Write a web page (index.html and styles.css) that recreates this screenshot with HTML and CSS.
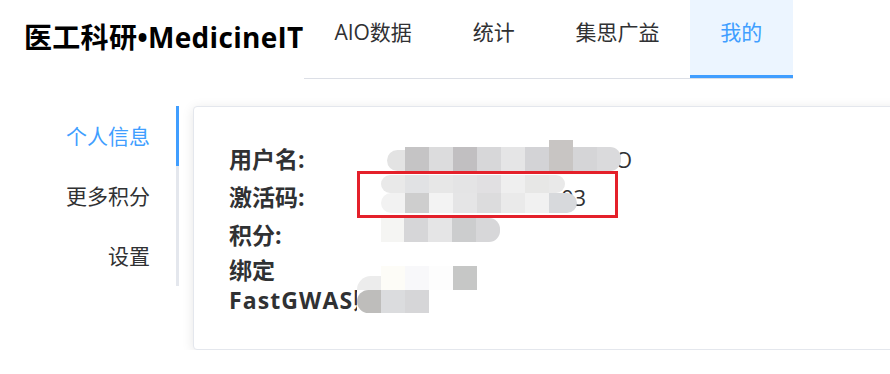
FILE: index.html
```html
<!DOCTYPE html>
<html lang="zh-CN">
<head>
<meta charset="utf-8">
<title>医工科研•MedicineIT</title>
<link rel="stylesheet" href="styles.css">
</head>
<body>
<header class="topbar">
  <div class="brand">医工科研•MedicineIT</div>
  <nav class="menu">
    <a class="menu-item">AIO数据</a>
    <a class="menu-item">统计</a>
    <a class="menu-item">集思广益</a>
    <a class="menu-item is-active">我的</a>
  </nav>
</header>
<main class="layout">
  <aside class="tabs">
    <div class="tab is-active">个人信息</div>
    <div class="tab">更多积分</div>
    <div class="tab">设置</div>
  </aside>
  <section class="card">
    <div class="info">
      <div class="label">用户名:</div>
      <div class="value v1">
        <span class="mosaic m1">
          <i class="cap-l c-e3"></i><i class="c-c5"></i><i class="c-dc"></i><i class="c-c1"></i><i class="c-d7"></i><i class="c-e5"></i><i class="c-d3"></i><i class="tall c-c8"></i><i class="c-d5"></i><i class="cap-r c-da"></i>
        </span><span class="tail t1">O</span>
      </div>

      <div class="label">激活码:</div>
      <div class="value v2">
        <span class="mosaic m2">
          <span class="band b-top">
            <i class="c-e9 rl"></i><i class="c-e1"></i><i class="c-e7"></i><i class="c-e4"></i><i class="c-e0"></i><i class="c-ef"></i><i class="c-e6"></i><i class="c-e9 cap-r"></i>
          </span>
          <span class="band b-bot">
            <i class="c-f2 rl"></i><i class="c-ce"></i><i class="c-f3"></i><i class="c-e5"></i><i class="c-dc"></i><i class="c-ea"></i><i class="c-f1"></i><i class="c-d8 wide cap-r"></i>
          </span>
        </span><span class="tail t2">03</span>
      </div>

      <div class="label">积分:</div>
      <div class="value v3">
        <span class="mosaic m3">
          <i class="c-f5"></i><i class="c-d6"></i><i class="c-e5"></i><i class="c-cd"></i><i class="c-d7 cap-r"></i>
        </span>
      </div>

      <div class="label l4">绑定 <span class="latin">FastGWAS账号:</span></div>
      <div class="value v4">
        <span class="mosaic m4">
          <span class="band b-top4">
            <i class="c-ed curve"></i><i class="c-fd"></i><i class="c-f8"></i><i class="c-fe"></i><i class="c-c6"></i>
          </span>
          <span class="band b-bot4">
            <i class="c-be rl"></i><i class="c-db"></i><i class="c-d6"></i>
          </span>
        </span>
      </div>
    </div>
    <div class="annot"></div>
  </section>
</main>
</body>
</html>
```

FILE: styles.css
```css
html, body {
  margin: 0;
  padding: 0;
  overflow: hidden;
  background: #ffffff;
}

body {
  font-family: "Open Sans", "Noto Sans CJK SC", sans-serif;
  color: #303133;
}

/* ---------- header ---------- */
.topbar {
  display: flex;
  align-items: flex-start;
}

.brand {
  flex: 0 0 304px;
  box-sizing: border-box;
  padding-left: 24px;
  height: 78px;
  line-height: 74px;
  font-size: 28px;
  font-weight: 700;
  letter-spacing: 0.3px;
  color: #000000;
  white-space: nowrap;
}

.menu {
  display: flex;
  border-bottom: 1px solid #dcdfe6;
}

.menu-item {
  display: block;
  height: 75px;
  line-height: 65px;
  padding: 0 30.4px;
  border-bottom: 3px solid transparent;
  font-size: 21px;
  color: #303133;
  white-space: nowrap;
}

.menu-item.is-active {
  background: #ecf5ff;
  color: #409eff;
  border-bottom-color: #409eff;
}

/* ---------- layout ---------- */
.layout {
  display: flex;
  align-items: flex-start;
  padding-top: 27px;
}

.tabs {
  flex: 0 0 179px;
  display: flex;
  flex-direction: column;
}

.tab {
  height: 60px;
  line-height: 60px;
  padding-right: 26px;
  text-align: right;
  font-size: 21px;
  color: #303133;
  border-right: 3px solid #e4e7ed;
}

.tab.is-active {
  color: #409eff;
  border-right-color: #409eff;
}

/* ---------- card ---------- */
.card {
  position: relative;
  flex: 0 0 760px;
  box-sizing: border-box;
  height: 244px;
  margin-left: 14px;
  padding: 33px 0 0 35px;
  border: 1px solid #e4e7ed;
  border-radius: 4px;
  background: #ffffff;
  box-shadow: 0 2px 12px 0 rgba(0, 0, 0, 0.1);
}

.info {
  display: grid;
  grid-template-columns: 152px 1fr;
}

.label {
  padding: 4px 0;
  line-height: 30px;
  font-size: 23px;
  font-weight: 700;
  color: #303133;
}

.label.l4 {
  padding-top: 1px;
}

.label .latin {
  white-space: nowrap;
  letter-spacing: 1.1px;
}

.value {
  display: flex;
  align-items: flex-start;
  font-size: 22px;
  color: #303133;
}

.tail {
  position: relative;
  line-height: 38px;
  z-index: 0;
}

/* ---------- mosaic redactions ---------- */
.mosaic {
  position: relative;
  z-index: 1;
  display: flex;
}

.mosaic i {
  display: block;
  width: 24px;
  height: 24px;
  flex: none;
}

.m1 {
  margin-left: 6px;
  align-items: flex-end;
  height: 31px;
}

.m1 .tall {
  height: 31px;
}

.m1 .cap-l {
  width: 18px;
  height: 21px;
  border-radius: 11px 0 0 11px;
}

.cap-r {
  border-radius: 0 11px 11px 0;
}

.rl {
  border-radius: 10px 0 0 10px;
}

.t1 {
  margin-left: -6px;
}

.m2 {
  margin-top: -3px;
  flex-direction: column;
}

.band {
  display: flex;
}

.b-top i {
  height: 18px;
}

.b-top .cap-r {
  width: 16px;
}

.b-bot i {
  height: 20px;
}

.b-bot .wide {
  width: 28px;
}

.t2 {
  margin-left: -16px;
}

.m3 {
  margin-top: 2px;
}

.m3 i:first-child {
  width: 23px;
}

.m4 {
  margin-top: 12px;
  margin-left: -24px;
  flex-direction: column;
}

.b-top4 i {
  height: 24px;
}

.b-top4 .curve {
  margin-top: 10px;
  height: 14px;
  border-radius: 14px 0 0 0;
}

.b-bot4 {
  background: #ffffff;
  width: 120px;
}

.b-bot4 i {
  height: 23px;
}

.b-bot4 .rl {
  border-radius: 12px 0 0 12px;
}

/* mosaic tones */
.c-be { background: #bebdbb; }
.c-c1 { background: #c1bfc1; }
.c-c5 { background: #c5c4c5; }
.c-c6 { background: #c6c7c6; }
.c-c8 { background: #c8c5c3; }
.c-cd { background: #cccdce; }
.c-ce { background: #cecece; }
.c-d3 { background: #d3d3d6; }
.c-d5 { background: #d5d5d7; }
.c-d6 { background: #d6d6d8; }
.c-d7 { background: #d7d7d9; }
.c-d8 { background: #d7d9dc; }
.c-da { background: #dadadc; }
.c-db { background: #dbdcde; }
.c-dc { background: #dcdcdd; }
.c-e0 { background: #e1e0e2; }
.c-e1 { background: #e1e2e4; }
.c-e3 { background: #e3e3e3; }
.c-e4 { background: #e4e4e5; }
.c-e5 { background: #e5e5e6; }
.c-e6 { background: #e7e7e6; }
.c-e7 { background: #e7e7e7; }
.c-e9 { background: #e9e9e9; }
.c-ea { background: #eaeaea; }
.c-ed { background: #ececec; }
.c-ef { background: #efefef; }
.c-f1 { background: #f1f1f1; }
.c-f2 { background: #f2f2f2; }
.c-f3 { background: #f3f3f3; }
.c-f5 { background: #f5f5f3; }
.c-f8 { background: #f8f8fa; }
.c-fd { background: #fdfcf7; }
.c-fe { background: #fdfdfd; }

/* ---------- red annotation box ---------- */
.annot {
  position: absolute;
  left: 163px;
  top: 64px;
  width: 261px;
  height: 47px;
  box-sizing: border-box;
  border: 3px solid #e4202a;
}
```
